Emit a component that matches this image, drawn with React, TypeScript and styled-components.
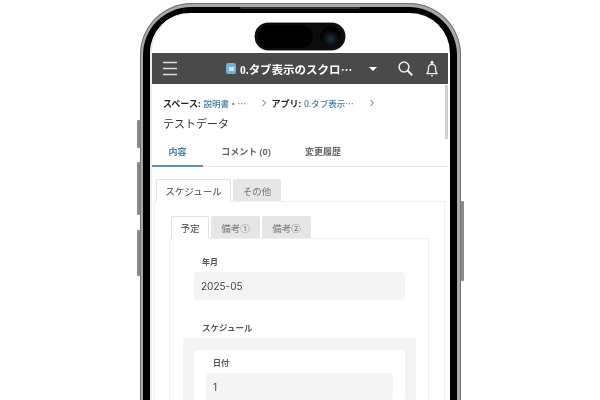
import React from "react";
import styled, { createGlobalStyle } from "styled-components";

const GlobalStyle = createGlobalStyle`
  html, body {
    margin: 0;
    padding: 0;
    background: #fff;
  }
  body {
    font-family: "Noto Sans", "Noto Sans CJK JP", sans-serif;
    color: #333;
  }
`;

const Page = styled.div`
  width: 600px;
  height: 400px;
  overflow: hidden;
  display: flex;
  justify-content: center;
  align-items: flex-start;
  padding: 3px 0 0 1px;
  box-sizing: border-box;
  background: #fff;
  filter: blur(0.3px);
`;

const Phone = styled.div`
  position: relative;
  flex: none;
  width: 321px;
  height: 640px;
  box-sizing: border-box;
  padding: 4px 4px 0 3px;
  border-radius: 52px;
  background: #a9a9a9;
  box-shadow: inset 0 0 0 1px #747474;
`;

const SideButton = styled.div<{ $side: "left" | "right"; $top: number; $height: number }>`
  position: absolute;
  ${({ $side }) => $side}: -3px;
  top: ${({ $top }) => $top}px;
  height: ${({ $height }) => $height}px;
  width: 3px;
  background: #8a8a8a;
  border-radius: 1px;
`;

const SpeakerSlot = styled.div`
  position: absolute;
  top: 4px;
  left: 100px;
  width: 120px;
  height: 2px;
  border-radius: 0 0 3px 3px;
  background: #333;
`;

const Bezel = styled.div`
  height: 100%;
  box-sizing: border-box;
  padding: 6px 7px 0 7px;
  border-radius: 48px;
  background: #000;
`;

const Screen = styled.div`
  position: relative;
  height: 100%;
  overflow: hidden;
  border-radius: 40px 40px 0 0;
  background: #fff;
  padding: 40px 2px 0 2px;
  box-sizing: border-box;
  box-shadow: inset 2px 0 0 #ececec;
`;

const ScrollThumb = styled.div`
  position: absolute;
  top: 72px;
  right: 2px;
  width: 3px;
  height: 54px;
  background: #cfcfcf;
`;

const Island = styled.div`
  position: absolute;
  top: 10px;
  left: 105px;
  width: 90px;
  height: 27px;
  border-radius: 14px;
  background: #0c0c0e;
  box-shadow: 0 0 0 0.5px #2a2a2a;
`;

const IslandPill = styled.div`
  position: absolute;
  top: 2px;
  left: 3px;
  width: 55px;
  height: 23px;
  border-radius: 12px;
  background: #000;
`;

const Lens = styled.div`
  position: absolute;
  top: 3px;
  right: 4px;
  width: 21px;
  height: 21px;
  border-radius: 50%;
  background: radial-gradient(circle at 50% 62%, #1c3640 0, #101c22 24%, #08090c 45%, #000 62%);
`;

const AppBar = styled.header`
  display: flex;
  align-items: center;
  height: 31px;
  background: #4a4a4a;
  color: #fff;
`;

const IconButton = styled.span<{ $left: number }>`
  display: flex;
  flex: none;
  margin-left: ${({ $left }) => $left}px;
`;

const AppIcon = styled.span`
  flex: none;
  width: 10px;
  height: 11px;
  margin: 0 4px 0 49px;
  border-radius: 2px;
  background: #6fb0dc;
  display: flex;
  align-items: center;
  justify-content: center;
  &::after {
    content: "";
    width: 5px;
    height: 4px;
    background: #cfe4f2;
  }
`;

const AppTitle = styled.span`
  flex: none;
  width: 117px;
  white-space: nowrap;
  font-family: "Liberation Serif", "Noto Sans CJK JP", serif;
  font-size: 11.5px;
  font-weight: 700;
`;

const Ellipsis = styled.span`
  font-family: "Noto Sans CJK JP", sans-serif;
`;

const Caret = styled.span`
  flex: none;
  margin-left: 12px;
  width: 0;
  height: 0;
  border-left: 4px solid transparent;
  border-right: 4px solid transparent;
  border-top: 4px solid #fff;
`;

const Breadcrumbs = styled.nav`
  display: flex;
  align-items: center;
  height: 12px;
  margin: 13px 0 0 11px;
  font-size: 9px;
  white-space: nowrap;
`;

const CrumbLabel = styled.b`
  color: #222;
  margin-right: 3px;
`;

const CrumbLink = styled.a<{ $width: number }>`
  color: #3f7fa8;
  font-size: 8.5px;
  font-weight: 500;
  width: ${({ $width }) => $width}px;
  flex: none;
`;

const CrumbArrow = styled.svg`
  width: 6px;
  height: 8px;
  flex: none;
  margin-right: 4px;
`;

const RecordTitle = styled.h1`
  margin: 8px 0 0 11px;
  font-size: 11px;
  line-height: 14px;
  font-weight: 400;
  color: #333;
`;

const DetailTabs = styled.div`
  display: flex;
  height: 27px;
  margin-top: 8px;
  border-bottom: 1px solid #e6e6e6;
  font-size: 9px;
  font-weight: 700;
`;

const DetailTab = styled.div<{ $active?: boolean; $width: number }>`
  flex: none;
  width: ${({ $width }) => $width}px;
  display: flex;
  align-items: center;
  justify-content: center;
  margin-bottom: -1px;
  padding-bottom: 2px;
  box-sizing: border-box;
  color: ${({ $active }) => ($active ? "#3f7fa8" : "#666")};
  border-bottom: 2px solid ${({ $active }) => ($active ? "#5b93b8" : "transparent")};
`;

const TabRow = styled.div<{ $left: number; $gap: number; $top?: number }>`
  display: flex;
  gap: ${({ $gap }) => $gap}px;
  margin: ${({ $top }) => $top ?? 0}px 0 0 ${({ $left }) => $left}px;
  position: relative;
  z-index: 1;
`;

const FormTab = styled.div<{ $active?: boolean; $width: number; $height: number }>`
  flex: none;
  box-sizing: border-box;
  width: ${({ $width }) => $width}px;
  height: ${({ $height }) => $height}px;
  display: flex;
  align-items: center;
  justify-content: center;
  font-family: "Noto Sans CJK JP", sans-serif;
  font-size: 9.5px;
  border-radius: 2px 2px 0 0;
  color: ${({ $active }) => ($active ? "#444" : "#777")};
  background: ${({ $active }) => ($active ? "#fff" : "#e6e6e6")};
  border: 1px solid ${({ $active }) => ($active ? "#e2e2e2" : "#e6e6e6")};
  border-bottom: ${({ $active }) => ($active ? "1px solid #fff" : "none")};
`;

const OuterPanel = styled.section`
  margin: -1px 3px 0 2px;
  padding: 14px 15px 0 14px;
  border: 1px solid #f0f0f0;
  border-bottom: none;
`;

const InnerPanel = styled.div`
  margin-top: -1px;
  padding: 17px 12px 0 13px;
  border: 1px solid #f0f0f0;
  border-bottom: none;
`;

const Field = styled.div`
  margin: 0 11px;
`;

const FieldLabel = styled.div<{ $top?: number; $left?: number }>`
  margin: ${({ $top }) => $top ?? 0}px 0 5px ${({ $left }) => $left ?? 8}px;
  font-size: 8px;
  line-height: 11px;
  font-weight: 700;
  color: #555;
`;

const SectionLabel = styled(FieldLabel)`
  font-size: 8.5px;
`;

const ValueBox = styled.div<{ $height: number }>`
  box-sizing: border-box;
  height: ${({ $height }) => $height}px;
  display: flex;
  align-items: center;
  padding-left: 7px;
  font-family: "Inter", "Noto Sans", sans-serif;
  font-size: 10px;
  color: #444;
  background: #f4f4f4;
  border-radius: 4px;
`;

const SubTable = styled.div`
  background: #f4f4f4;
  padding: 12px 11px 0 11px;
`;

const SubCard = styled.div`
  background: #fff;
  border-radius: 4px;
  padding: 7px 12px 0 12px;
`;

const Arrow = () => (
  <CrumbArrow viewBox="0 0 6 8" fill="none" stroke="#666" strokeWidth="1">
    <path d="M1.5 1 L4.5 4 L1.5 7" />
  </CrumbArrow>
);

const App: React.FC = () => {
  return (
    <Page>
      <GlobalStyle />
      <Phone>
        <SideButton $side="left" $top={117} $height={28} />
        <SideButton $side="left" $top={159} $height={53} />
        <SideButton $side="left" $top={227} $height={46} />
        <SideButton $side="right" $top={198} $height={80} />
        <SpeakerSlot />
        <Bezel>
          <Screen>
            <Island>
              <IslandPill />
              <Lens />
            </Island>
            <ScrollThumb />
            <AppBar>
              <IconButton $left={11}>
                <svg width="14" height="15" viewBox="0 0 14 15" stroke="#ddd" strokeWidth="1.4">
                  <path d="M0 1.5h14M0 7.5h14M0 13.5h14" />
                </svg>
              </IconButton>
              <AppIcon />
              <AppTitle>0.タブ表示のスクロ<Ellipsis>…</Ellipsis></AppTitle>
              <Caret />
              <IconButton $left={21}>
                <svg width="15" height="15" viewBox="0 0 15 15" fill="none" stroke="#eee" strokeWidth="1.5">
                  <circle cx="6" cy="6" r="4.9" />
                  <path d="M9.5 9.5 L14.2 14.2" strokeWidth="2" />
                </svg>
              </IconButton>
              <IconButton $left={13}>
                <svg width="12" height="17" viewBox="0 0 12 17" fill="none" stroke="#eee" strokeWidth="1.3">
                  <path d="M.4 13.6h11.2M1 13.6c1.5-1.4 1.5-3.2 1.5-5.8a3.5 3.5 0 0 1 7 0c0 2.6 0 4.4 1.5 5.8" />
                  <circle cx="6" cy="2.4" r=".9" fill="#eee" />
                  <circle cx="6" cy="15.8" r=".9" fill="#eee" stroke="none" />
                </svg>
              </IconButton>
            </AppBar>
            <Breadcrumbs>
              <CrumbLabel>スペース:</CrumbLabel>
              <CrumbLink $width={58}>説明書・<Ellipsis>…</Ellipsis></CrumbLink>
              <Arrow />
              <CrumbLabel>アプリ:</CrumbLabel>
              <CrumbLink $width={65}>0.タブ表示<Ellipsis>…</Ellipsis></CrumbLink>
              <Arrow />
            </Breadcrumbs>
            <RecordTitle>テストデータ</RecordTitle>
            <DetailTabs>
              <DetailTab $active $width={51}>内容</DetailTab>
              <DetailTab $width={86}>コメント (0)</DetailTab>
              <DetailTab $width={68}>変更履歴</DetailTab>
            </DetailTabs>
            <TabRow $left={4} $gap={2} $top={12}>
              <FormTab $active $width={75} $height={23}>スケジュール</FormTab>
              <FormTab $width={48} $height={22}>その他</FormTab>
            </TabRow>
            <OuterPanel>
              <TabRow $left={2} $gap={2}>
                <FormTab $active $width={38} $height={23}>予定</FormTab>
                <FormTab $width={49} $height={22}>備考①</FormTab>
                <FormTab $width={49} $height={22}>備考②</FormTab>
              </TabRow>
              <InnerPanel>
                <Field>
                  <FieldLabel>年月</FieldLabel>
                  <ValueBox $height={28}>2025-05</ValueBox>
                </Field>
                <SectionLabel $top={22} $left={19}>スケジュール</SectionLabel>
                <SubTable>
                  <SubCard>
                    <FieldLabel $left={7}>日付</FieldLabel>
                    <ValueBox $height={28}>1</ValueBox>
                  </SubCard>
                </SubTable>
              </InnerPanel>
            </OuterPanel>
          </Screen>
        </Bezel>
      </Phone>
    </Page>
  );
};

export default App;
